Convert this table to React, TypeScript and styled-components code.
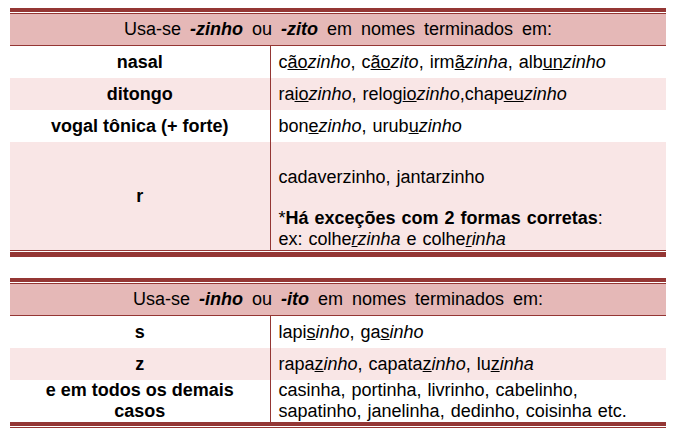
import React from "react";
import styled, { createGlobalStyle } from "styled-components";

const DARK = "#943634";
const HEAD_BG = "#e5b8b7";
const PALE_BG = "#f9e6e6";

const GlobalStyle = createGlobalStyle`
  body {
    margin: 0;
    padding: 8px 10px;
    background: #fff;
    font-family: "Liberation Sans", Arial, sans-serif;
    font-size: 18px;
    color: #000;
  }
`;

const Page = styled.div`
  width: 656px;
  display: flex;
  flex-direction: column;
  gap: 21px;
`;

type Bottom = "thin-thick" | "thick-thin";

const Frame = styled.div<{ $bottom: Bottom }>`
  border-top: 4px solid ${DARK};
  padding-top: 1px;
  ${(p) =>
    p.$bottom === "thin-thick"
      ? `border-bottom: 5px solid ${DARK}; padding-bottom: 1px;`
      : `padding-bottom: 0;`}
`;

const Table = styled.table<{ $bottom: Bottom }>`
  width: 100%;
  table-layout: fixed;
  border-collapse: collapse;
  border-top: 1px solid ${DARK};
  ${(p) =>
    p.$bottom === "thin-thick"
      ? `border-bottom: 1px solid ${DARK};`
      : `border-bottom: 4px solid ${DARK};`}
`;

const Under = styled.div`
  height: 1px;
  margin-top: 1px;
  background: ${DARK};
`;

const HeadCell = styled.th`
  background: ${HEAD_BG};
  height: 31px;
  padding: 0;
  font-weight: normal;
  text-align: center;
  word-spacing: 4px;
  border-bottom: 1px solid ${DARK};
`;

const Row = styled.tr<{ $pale?: boolean }>`
  background: ${(p) => (p.$pale ? PALE_BG : "#fff")};
  & + & td {
    border-top: 1px solid ${DARK};
  }
`;

const Key = styled.td<{ $h?: number }>`
  height: ${(p) => p.$h ?? 32}px;
  padding: 0 2px;
  text-align: center;
  vertical-align: middle;
  font-weight: bold;
  line-height: 21px;
  border-right: 1px solid ${DARK};
`;

const Val = styled.td<{ $bottom?: boolean }>`
  padding: 0 8px;
  vertical-align: ${(p) => (p.$bottom ? "bottom" : "middle")};
  line-height: 21px;
  word-spacing: 1px;
  white-space: nowrap;
`;

const Suffix = styled.b`
  font-style: italic;
`;

const Note = styled.div`
  margin-top: 20px;
`;

function Cols() {
  return (
    <colgroup>
      <col style={{ width: 260 }} />
      <col />
    </colgroup>
  );
}

export default function App() {
  return (
    <>
      <GlobalStyle />
      <Page>
        <Frame $bottom="thin-thick">
          <Table $bottom="thin-thick">
            <Cols />
            <thead>
              <tr>
                <HeadCell colSpan={2}>
                  Usa-se <Suffix>-zinho</Suffix> ou <Suffix>-zito</Suffix> em nomes terminados em:
                </HeadCell>
              </tr>
            </thead>
            <tbody>
              <Row>
                <Key>nasal</Key>
                <Val>
                  c<u>ão</u><i>zinho</i>, c<u>ão</u><i>zito</i>, irm<u>ã</u><i>zinha</i>, alb<u>un</u><i>zinho</i>
                </Val>
              </Row>
              <Row $pale>
                <Key>ditongo</Key>
                <Val>
                  ra<u>io</u><i>zinho</i>, relog<u>io</u><i>zinho</i>,chap<u>eu</u><i>zinho</i>
                </Val>
              </Row>
              <Row>
                <Key>vogal tônica (+ forte)</Key>
                <Val>
                  bon<u>e</u><i>zinho</i>, urub<u>u</u><i>zinho</i>
                </Val>
              </Row>
              <Row $pale>
                <Key $h={108}>r</Key>
                <Val $bottom>
                  <div>cadaverzinho, jantarzinho</div>
                  <Note>
                    *<b>Há exceções com 2 formas corretas</b>:
                    <br />
                    ex: colhe<i><u>r</u>zinha</i> e colhe<i><u>r</u>inha</i>
                  </Note>
                </Val>
              </Row>
            </tbody>
          </Table>
        </Frame>

        <Frame $bottom="thick-thin">
          <Table $bottom="thick-thin">
            <Cols />
            <thead>
              <tr>
                <HeadCell colSpan={2}>
                  Usa-se <Suffix>-inho</Suffix> ou <Suffix>-ito</Suffix> em nomes terminados em:
                </HeadCell>
              </tr>
            </thead>
            <tbody>
              <Row>
                <Key>s</Key>
                <Val>
                  lapi<u>s</u><i>inho</i>, ga<u>s</u><i>inho</i>
                </Val>
              </Row>
              <Row $pale>
                <Key>z</Key>
                <Val>
                  rapa<u>z</u><i>inho</i>, capata<u>z</u><i>inho</i>, lu<u>z</u><i>inha</i>
                </Val>
              </Row>
              <Row>
                <Key $h={41}>
                  e em todos os demais
                  <br />
                  casos
                </Key>
                <Val>
                  casinha, portinha, livrinho, cabelinho,
                  <br />
                  sapatinho, janelinha, dedinho, coisinha etc.
                </Val>
              </Row>
            </tbody>
          </Table>
          <Under />
        </Frame>
      </Page>
    </>
  );
}
